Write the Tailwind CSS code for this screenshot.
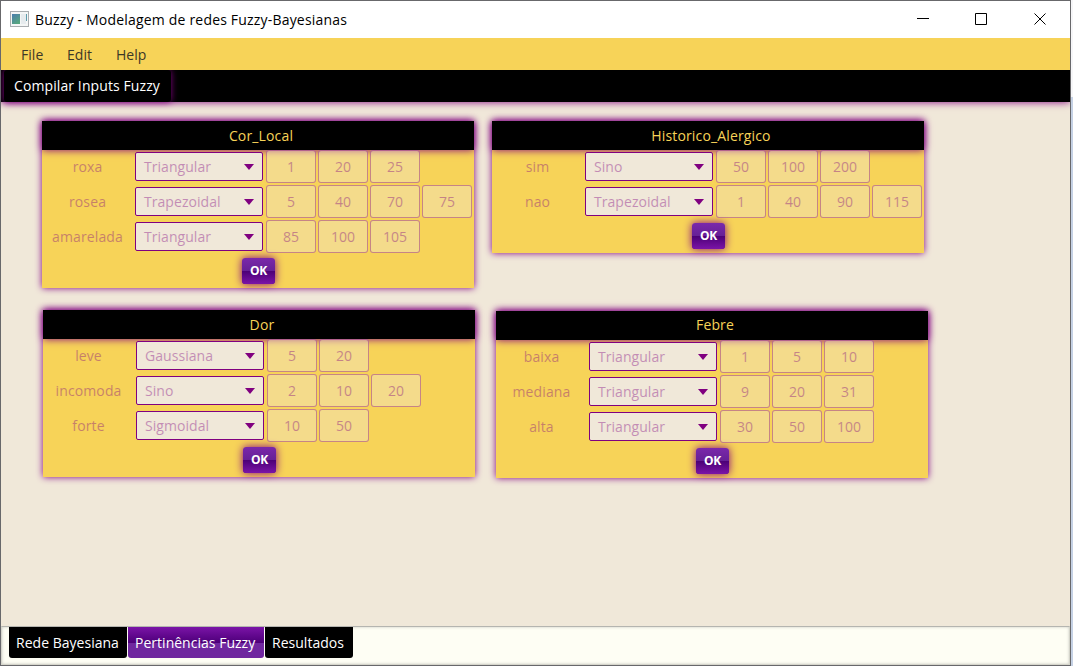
<!DOCTYPE html>
<html lang="pt">
<head>
<meta charset="utf-8">
<title>Buzzy - Modelagem de redes Fuzzy-Bayesianas</title>
<script src="https://cdn.jsdelivr.net/npm/@tailwindcss/browser@4"></script>
</head>
<body class="w-[1073px] h-[666px] overflow-hidden bg-linear-to-b from-[#f6f6f8] from-[97px] to-[#c5d1e4] to-[97px] font-['Open_Sans',sans-serif] text-[14px] leading-[20px] tracking-[0.05px]">
<div class="w-[1071px] h-[666px] border border-[#68686b] flex flex-col bg-[#f0e8d9] overflow-hidden">
  <header class="h-[37px] shrink-0 bg-white flex items-center text-black">
    <svg class="ml-[9px] mr-[6px] mb-[1px]" width="19" height="16" viewBox="0 0 19 16"><defs><linearGradient id="g" x1="0" y1="0" x2="0.6" y2="1"><stop offset="0" stop-color="#4a7cae"/><stop offset="1" stop-color="#57a680"/></linearGradient></defs><rect x=".5" y=".5" width="18" height="15" fill="#f4f6f6" stroke="#a9adb0"/><rect x="2" y="3" width="8" height="10" fill="url(#g)"/><rect x="11" y="3" width="5" height="10" fill="#e6ebee"/><rect x="16" y="3" width="1" height="7" fill="#5f9cab"/></svg>
    <span class="whitespace-nowrap tracking-[0.19px]">Buzzy - Modelagem de redes Fuzzy-Bayesianas</span>
    <svg class="ml-auto mr-[24px] mb-[1px]" width="130" height="14" viewBox="0 0 130 14" fill="none" stroke="#000"><path d="M1 6.5h12M59.5 1.5h11v11h-11zM118.5 1.5l11 11M129.5 1.5l-11 11"/></svg>
  </header>
  <nav class="relative z-20 h-8 shrink-0 bg-[#f7d358] flex items-center pl-5 pt-[2px] text-[#3c3727]"><span class="w-[46px]">File</span><span class="w-[49px]">Edit</span><span>Help</span></nav>
  <div class="relative z-10 h-8 shrink-0 bg-black text-white shadow-[0_0_8px_#800080]"><div class="ml-[3px] w-[167px] h-8 rounded-[3px] bg-black pl-[10px] leading-[31px] tracking-[0.1px] shadow-[0_0_7px_#800080] whitespace-nowrap">Compilar Inputs Fuzzy</div></div>
  <main id="canvas" class="h-[524px] shrink-0 pt-[19px] flex flex-col"></main>
  <footer class="grow bg-[#fefef4] border border-[#d5d5cb] border-t-[#b5b5b0] shadow-[inset_0_0_3px_#c8c8c0] flex gap-px pl-[7px] text-white whitespace-nowrap tracking-[0.02px]">
    <div class="w-[118px] h-[31px] bg-black rounded-b-[3px] pl-[7px] leading-[31px]">Rede Bayesiana</div>
    <div class="w-[136px] h-[31px] bg-linear-to-b from-[#7b14a7] from-0% via-[#4e007a] via-50% to-[#70279f] to-50% rounded-b-[3px] pl-[7px] leading-[31px]">Pertinências Fuzzy</div>
    <div class="w-[88px] h-[31px] bg-black rounded-b-[3px] pl-[7px] leading-[31px]">Resultados</div>
  </footer>
</div>
<script>
const rows = [
  ['flex items-start gap-[18px] pl-[41px] h-[189px]', [
    ['', 'leading-[29px]', 'Cor_Local', [['roxa','Triangular',1,20,25],['rosea','Trapezoidal',5,40,70,75],['amarelada','Triangular',85,100,105]]],
    ['', 'leading-[29px]', 'Historico_Alergico', [['sim','Sino',50,100,200],['nao','Trapezoidal',1,40,90,115]]]]],
  ['flex items-start gap-[21px] pl-[42px]', [
    ['', 'leading-[29px]', 'Dor', [['leve','Gaussiana',5,20],['incomoda','Sino',2,10,20],['forte','Sigmoidal',10,50]]],
    ['mt-px', 'leading-[27px]', 'Febre', [['baixa','Triangular',1,5,10],['mediana','Triangular',9,20,31],['alta','Triangular',30,50,100]]]]]
];
const input = v => `<div class="w-[50px] h-[33px] border border-[#800080]/40 rounded-[3px] bg-[#f0e8d9]/40 text-center leading-[32px] text-[#800080]/40">${v}</div>`;
const line = ([name, kind, ...vals]) => `<div class="h-[35px] flex items-start gap-[2px]">
  <div class="w-[91px] text-center leading-[34px] tracking-[0.12px] text-[#800080]/40">${name}</div>
  <div class="w-[128px] h-[29px] mt-[2px] mr-px border border-[#800080] rounded-[2px] bg-[#f0e8d9] flex items-center justify-between pl-2 pr-[8px] leading-[27px] text-[#800080]/40"><span>${kind}</span><svg width="10" height="6" viewBox="0 0 10 6"><path d="M0 0h10L5 6z" fill="#800080"/></svg></div>
  ${vals.map(input).join('')}</div>`;
const panel = ([cls, lead, title, items]) => `<section class="w-[432px] bg-[#f7d358] shadow-[0_0_7px_#800080] ${cls}">
  <h2 class="h-[29px] bg-black text-[#f7d358] text-center pl-[6px] tracking-[0.15px] shadow-[0_0_8px_#800080] ${lead}">${title}</h2>
  ${items.map(line).join('')}
  <div class="h-[33px] pt-[3px]"><button class="block ml-[200px] w-[33px] h-[26px] rounded-[3px] bg-linear-to-b from-[#7a28ab] from-0% via-[#662096] via-50% to-[#4b0076] to-50% shadow-[0_0_8px_#800080]"><span class="block h-full rounded-[3px] bg-linear-to-b from-transparent from-50% to-[#7b14a7] text-white font-bold text-[12px] tracking-[-0.2px] leading-[26px]">OK</span></button></div>
</section>`;
document.getElementById('canvas').innerHTML = rows.map(([c, ps]) => `<div class="${c}">${ps.map(panel).join('')}</div>`).join('');
</script>
</body>
</html>
